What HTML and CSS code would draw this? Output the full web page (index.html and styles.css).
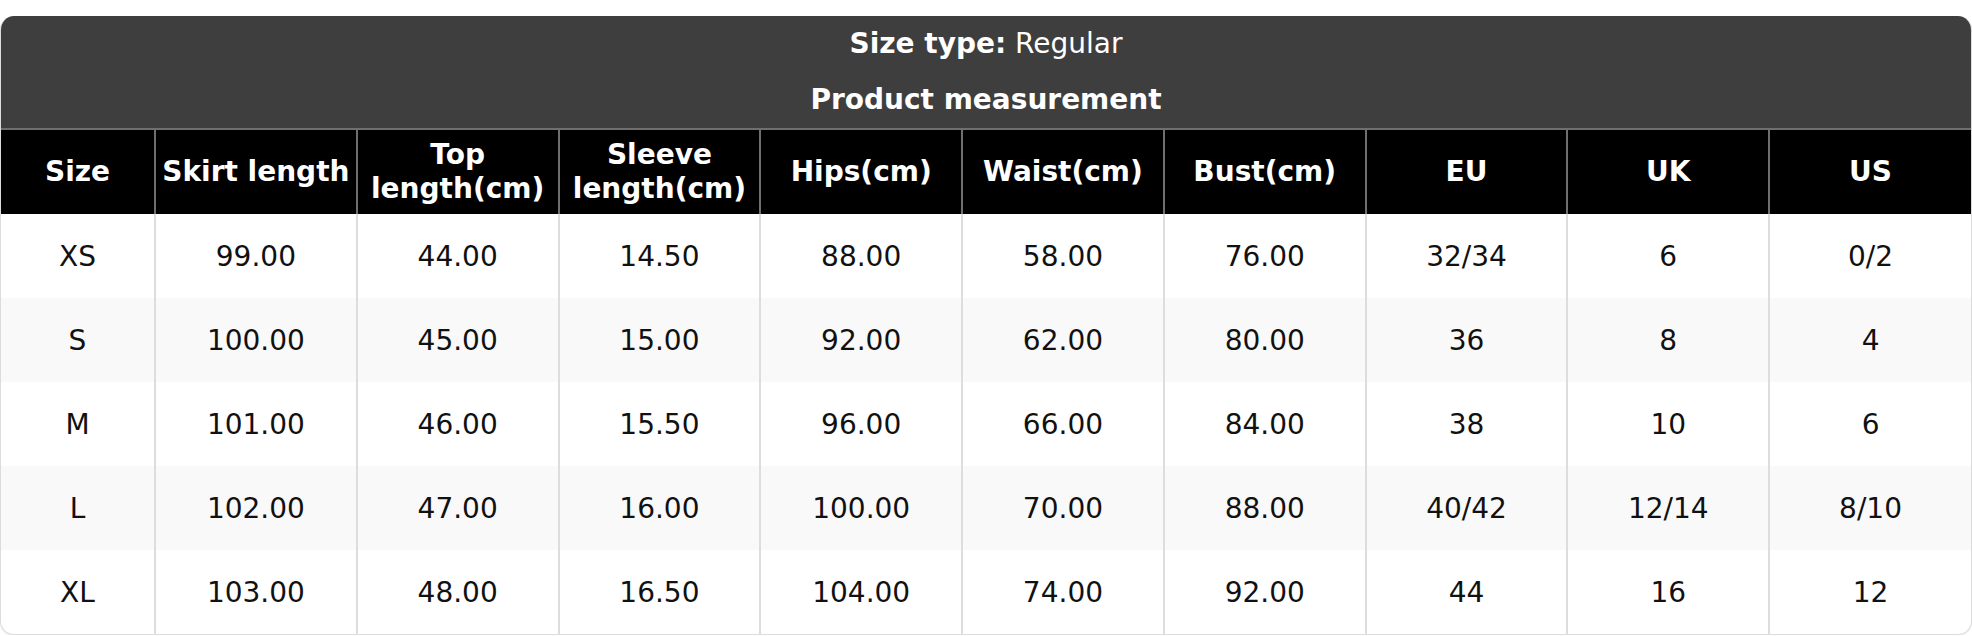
FILE: index.html
```html
<!DOCTYPE html>
<html>
<head>
<meta charset="utf-8">
<link rel="stylesheet" href="styles.css">
</head>
<body>
<div class="card">
  <div class="title-row"><b>Size type:</b> Regular</div>
  <div class="title-row"><b>Product measurement</b></div>
  <table class="size-table">
    <colgroup>
      <col class="col-size">
      <col><col><col><col><col><col><col><col><col>
    </colgroup>
    <thead>
      <tr>
        <th>Size</th>
        <th>Skirt length</th>
        <th>Top length(cm)</th>
        <th>Sleeve length(cm)</th>
        <th>Hips(cm)</th>
        <th>Waist(cm)</th>
        <th>Bust(cm)</th>
        <th>EU</th>
        <th>UK</th>
        <th>US</th>
      </tr>
    </thead>
    <tbody>
      <tr><td>XS</td><td>99.00</td><td>44.00</td><td>14.50</td><td>88.00</td><td>58.00</td><td>76.00</td><td>32/34</td><td>6</td><td>0/2</td></tr>
      <tr><td>S</td><td>100.00</td><td>45.00</td><td>15.00</td><td>92.00</td><td>62.00</td><td>80.00</td><td>36</td><td>8</td><td>4</td></tr>
      <tr><td>M</td><td>101.00</td><td>46.00</td><td>15.50</td><td>96.00</td><td>66.00</td><td>84.00</td><td>38</td><td>10</td><td>6</td></tr>
      <tr><td>L</td><td>102.00</td><td>47.00</td><td>16.00</td><td>100.00</td><td>70.00</td><td>88.00</td><td>40/42</td><td>12/14</td><td>8/10</td></tr>
      <tr><td>XL</td><td>103.00</td><td>48.00</td><td>16.50</td><td>104.00</td><td>74.00</td><td>92.00</td><td>44</td><td>16</td><td>12</td></tr>
    </tbody>
  </table>
</div>
</body>
</html>
```
FILE: styles.css
```css
html, body {
  margin: 0;
  padding: 0;
  background: #ffffff;
}
body {
  font-family: "DejaVu Sans", Verdana, sans-serif;
  padding-top: 16px;
}
.card {
  width: 1970px;
  border: 1px solid #dcdcdc;
  border-top: none;
  border-radius: 14px;
  overflow: hidden;
  background: #ffffff;
  box-shadow: 0 1px 2px rgba(0,0,0,0.08);
}
.title-row {
  background: #3e3e3e;
  color: #ffffff;
  font-size: 28px;
  height: 56px;
  line-height: 56px;
  text-align: center;
}
.title-row b {
  font-weight: bold;
}
.size-table {
  width: 100%;
  border-collapse: collapse;
  table-layout: fixed;
  font-size: 28px;
}
.col-size {
  width: 154px;
}
.size-table th {
  background: #000000;
  color: #ffffff;
  font-weight: bold;
  height: 85px;
  padding: 0 4px;
  line-height: 1.2;
  text-align: center;
  border-top: 2px solid #6f6f6f;
  border-left: 2px solid #6f6f6f;
  box-sizing: border-box;
}
.size-table th:first-child {
  border-left: none;
}
.size-table td {
  height: 84px;
  padding: 0 4px;
  text-align: center;
  color: #111111;
  border-left: 2px solid #dddddd;
  box-sizing: border-box;
}
.size-table td:first-child {
  border-left: none;
}
.size-table tbody tr:nth-child(even) td {
  background: #f9f9f9;
}
```
